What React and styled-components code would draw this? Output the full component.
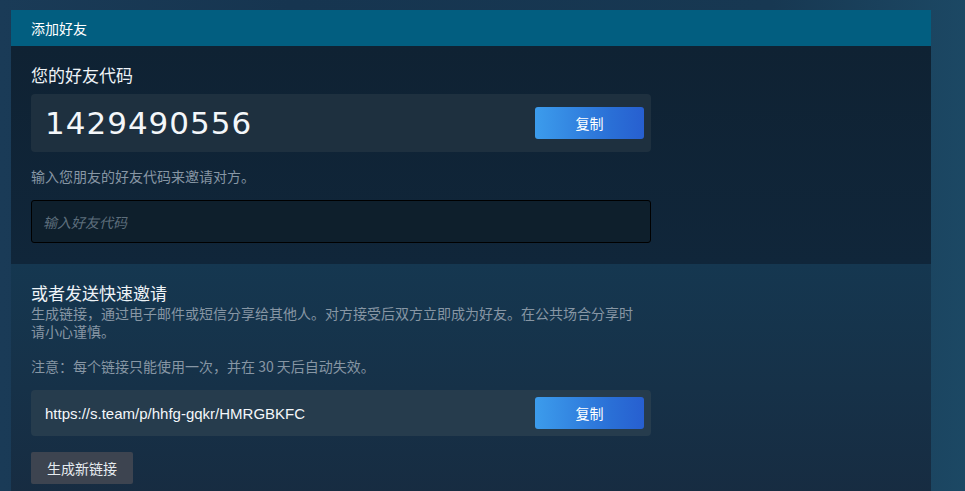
import React from "react";
import styled, { createGlobalStyle } from "styled-components";

const Global = createGlobalStyle`
  html, body {
    margin: 0;
    padding: 0;
    height: 100%;
  }
  body {
    background: linear-gradient(90deg, #1a3b57 0%, #163550 30%, #173852 80%, #1c4864 100%);
    font-family: "Noto Sans CJK SC", "Noto Sans", sans-serif;
    overflow: hidden;
  }
`;

const Page = styled.div`
  padding: 10px 34px 0 11px;
  min-height: 491px;
  box-sizing: border-box;
`;

const Panel = styled.div`
  width: 920px;
  display: flex;
  flex-direction: column;
`;

const Header = styled.div`
  height: 36px;
  background: #025e80;
  color: #ffffff;
  font-size: 14px;
  display: flex;
  align-items: center;
  padding-left: 20px;
`;

const Section = styled.div`
  padding: ${(p) => p.$pad};
  background: ${(p) => p.$bg};
`;

const Title = styled.div`
  font-size: 17px;
  line-height: 22px;
  color: #eef3f7;
  margin-bottom: ${(p) => p.$mb || 0}px;
`;

const Box = styled.div`
  width: 620px;
  height: ${(p) => p.$h}px;
  box-sizing: border-box;
  background: ${(p) => p.$bg};
  border-radius: 4px;
  display: flex;
  align-items: center;
  justify-content: space-between;
  padding: 0 7px 0 14px;
`;

const Code = styled.div`
  font-family: "DejaVu Sans", sans-serif;
  font-size: 31px;
  letter-spacing: 1px;
  color: #f4f7fa;
`;

const LinkText = styled.div`
  font-family: "Liberation Sans", Arial, sans-serif;
  font-size: 15px;
  color: #f4f7fa;
`;

const CopyButton = styled.button`
  width: 109px;
  height: 32px;
  border: none;
  border-radius: 3px;
  background: linear-gradient(90deg, #3c9cec 0%, #2a6fd6 70%, #275fd0 100%);
  color: #ffffff;
  font-family: "Noto Sans CJK SC", sans-serif;
  font-size: 14px;
  cursor: pointer;
  padding: 0;
`;

const Hint = styled.div`
  font-size: 14px;
  line-height: ${(p) => p.$lh || 20}px;
  color: #8796a4;
  margin: ${(p) => p.$m};
  width: ${(p) => p.$w || "auto"};
`;

const Input = styled.input`
  display: block;
  width: 620px;
  height: 43px;
  box-sizing: border-box;
  background: #0e1f2c;
  border: 1px solid #000000;
  border-radius: 3px;
  padding: 0 11px;
  color: #e0e6ea;
  font-family: "Noto Sans CJK SC", sans-serif;
  font-size: 14px;
  outline: none;
  &::placeholder {
    color: #5d6e7c;
    font-style: italic;
  }
`;

const GrayButton = styled.button`
  height: 32px;
  padding: 0 16px;
  border: none;
  border-radius: 2px;
  background: #3d4450;
  color: #e6ebef;
  font-family: "Noto Sans CJK SC", sans-serif;
  font-size: 14px;
  margin-top: 16px;
  cursor: pointer;
`;

export default function App() {
  return (
    <>
      <Global />
      <Page>
        <Panel>
          <Header>添加好友</Header>
          <Section $pad="18px 20px 21px 20px" $bg="linear-gradient(180deg, #0f2233 0%, #10263a 100%)">
            <Title $mb={8}>您的好友代码</Title>
            <Box $h={58} $bg="#1e303f">
              <Code>1429490556</Code>
              <CopyButton>复制</CopyButton>
            </Box>
            <Hint $m="14px 0 14px 0">输入您朋友的好友代码来邀请对方。</Hint>
            <Input placeholder="输入好友代码" />
          </Section>
          <Section $pad="18px 20px 30px 20px" $bg="linear-gradient(180deg, #153750 0%, #172b40 100%)">
            <Title>或者发送快速邀请</Title>
            <Hint $lh={18} $w="612px" $m="0">
              生成链接，通过电子邮件或短信分享给其他人。对方接受后双方立即成为好友。在公共场合分享时请小心谨慎。
            </Hint>
            <Hint $m="16px 0 14px 0">注意：每个链接只能使用一次，并在 30 天后自动失效。</Hint>
            <Box $h={46} $bg="#263c4d">
              <LinkText>https://s.team/p/hhfg-gqkr/HMRGBKFC</LinkText>
              <CopyButton>复制</CopyButton>
            </Box>
            <GrayButton>生成新链接</GrayButton>
          </Section>
        </Panel>
      </Page>
    </>
  );
}
